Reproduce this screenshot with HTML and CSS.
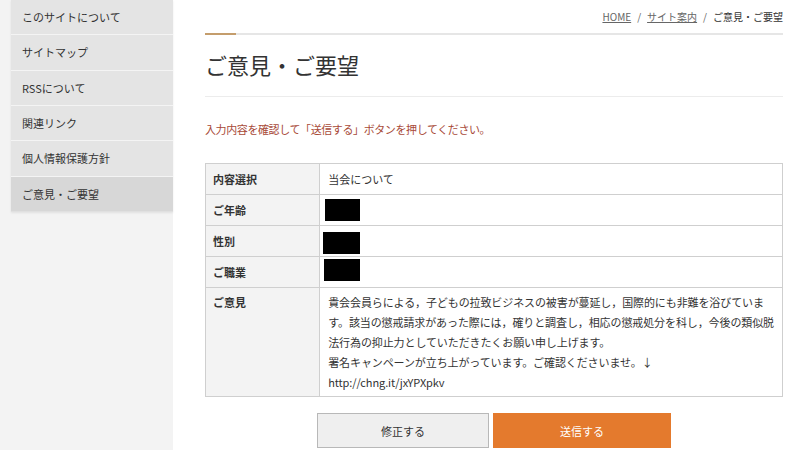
FILE: index.html
```html
<!DOCTYPE html>
<html lang="ja">
<head>
<meta charset="utf-8">
<title>ご意見・ご要望</title>
<link rel="stylesheet" href="styles.css">
</head>
<body>
<div class="page">
  <aside class="sidebar">
    <ul class="side-menu">
      <li class="side-item">このサイトについて</li>
      <li class="side-item">サイトマップ</li>
      <li class="side-item">RSSについて</li>
      <li class="side-item">関連リンク</li>
      <li class="side-item">個人情報保護方針</li>
      <li class="side-item is-current">ご意見・ご要望</li>
    </ul>
  </aside>
  <main class="main">
    <nav class="breadcrumb">
      <a class="crumb-link">HOME</a><span class="crumb-sep">/</span><a class="crumb-link">サイト案内</a><span class="crumb-sep">/</span><span class="crumb-current">ご意見・ご要望</span>
    </nav>
    <div class="rule"><span class="rule-accent"></span><span class="rule-rest"></span></div>
    <h1 class="page-title">ご意見・ご要望</h1>
    <p class="notice">入力内容を確認して「送信する」ボタンを押してください。</p>
    <table class="confirm">
      <tr><th>内容選択</th><td>当会について</td></tr>
      <tr><th>ご年齢</th><td><span class="redact redact-a"></span></td></tr>
      <tr><th>性別</th><td><span class="redact redact-b"></span></td></tr>
      <tr><th>ご職業</th><td><span class="redact redact-c"></span></td></tr>
      <tr class="opinion"><th>ご意見</th><td class="opinion-text">貴会会員らによる，子どもの拉致ビジネスの被害が蔓延し，国際的にも非難を浴びていま<br>す。該当の懲戒請求があった際には，確りと調査し，相応の懲戒処分を科し，今後の類似脱<br>法行為の抑止力としていただきたくお願い申し上げます。<br>署名キャンペーンが立ち上がっています。ご確認くださいませ。↓<br>http://chng.it/jxYPXpkv</td></tr>
    </table>
    <div class="actions">
      <button class="btn btn-back">修正する</button>
      <button class="btn btn-send">送信する</button>
    </div>
  </main>
</div>
</body>
</html>
```
FILE: styles.css
```css
* { box-sizing: border-box; }
html, body {
  margin: 0;
  padding: 0;
  background: #fff;
}
body {
  font-family: "Noto Sans CJK JP", "Noto Sans", sans-serif;
  color: #333;
  font-size: 11px;
}
.page {
  display: flex;
  width: 800px;
  height: 450px;
  overflow: hidden;
}
.sidebar {
  width: 173px;
  flex: none;
  background: #f3f3f3;
  padding-left: 11px;
}
.side-menu {
  list-style: none;
  margin: 0;
  padding: 0;
  box-shadow: 0 1px 2px rgba(0,0,0,0.08);
}
.side-item {
  height: 35.33px;
  line-height: 34.33px;
  padding-left: 11px;
  background: #e4e4e4;
  border-bottom: 1px solid #f4f4f4;
  font-size: 11px;
  color: #333;
}
.side-item.is-current {
  background: #d7d7d7;
  border-bottom-color: #e0e0e0;
}
.main {
  width: 578px;
  margin-left: 32px;
  flex: none;
}
.breadcrumb {
  height: 33px;
  line-height: 33px;
  text-align: right;
  font-size: 10px;
  color: #555;
}
.crumb-link {
  color: #666;
  text-decoration: underline;
}
.crumb-sep {
  margin: 0 6px;
  color: #666;
}
.crumb-current {
  color: #333;
}
.rule {
  display: flex;
  height: 2px;
}
.rule-accent {
  width: 31px;
  background: #c49d6c;
}
.rule-rest {
  flex: 1;
  background: #e6e6e6;
}
.page-title {
  margin: 0;
  padding: 14px 0 17px;
  line-height: 30px;
  font-size: 22px;
  font-weight: normal;
  color: #333;
  border-bottom: 1px solid #ececec;
}
.notice {
  margin: 24px 0 26px;
  line-height: 16px;
  font-size: 11px;
  color: #a84a38;
  letter-spacing: -0.4px;
}
.confirm {
  width: 578px;
  border-collapse: collapse;
  border: 1px solid #cfcfcf;
}
.confirm th,
.confirm td {
  border: 1px solid #cfcfcf;
  padding: 5px 8px;
  line-height: 20px;
  font-size: 11px;
  text-align: left;
  vertical-align: top;
}
.confirm th {
  width: 115px;
  background: #f3f3f3;
  font-weight: bold;
  padding-left: 7px;
}
.confirm td {
  color: #333;
}
.opinion th,
.opinion td {
  padding-top: 4px;
  padding-bottom: 4px;
  line-height: 20px;
}
.opinion-text {
  white-space: nowrap;
  letter-spacing: -0.1px;
}
.redact {
  display: block;
  height: 22px;
  margin: -1px 0 -1px -3px;
  background: #000;
}
.redact-a { width: 35px; }
.redact-b { width: 37px; margin-left: -5px; margin-top: 1px; margin-bottom: -3px; }
.redact-c { width: 36px; margin-left: -4px; margin-top: -3px; margin-bottom: 1px; }
.actions {
  display: flex;
  justify-content: center;
  gap: 4px;
  margin-top: 16px;
}
.btn {
  height: 35px;
  font-family: inherit;
  font-size: 11px;
  padding: 0;
  cursor: pointer;
}
.btn-back {
  width: 172px;
  background: #efefef;
  border: 1px solid #b8b8b8;
  color: #333;
}
.btn-send {
  width: 178px;
  background: #e47a2d;
  border: 1px solid #e47a2d;
  color: #fff;
}
```
